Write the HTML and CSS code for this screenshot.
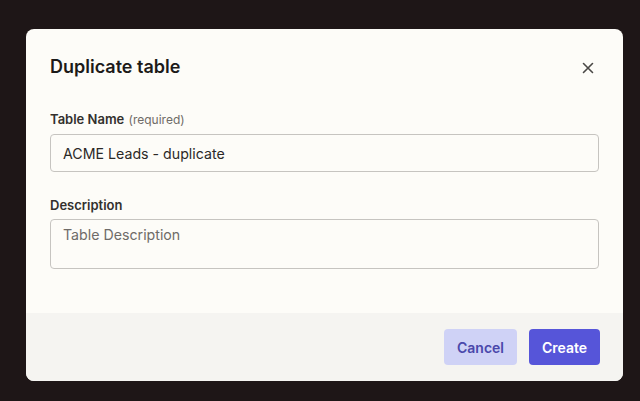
FILE: index.html
```html
<!DOCTYPE html>
<html lang="en">
<head>
  <meta charset="UTF-8">
  <title>Duplicate table</title>
  <link rel="stylesheet" href="styles.css">
</head>
<body>

<div class="modal">
  <div class="modal-header">
    <h2 class="modal-title">Duplicate table</h2>
    <span class="close">
      <svg width="12" height="12" viewBox="0 0 12 12"><path d="M1.5 1.5L10.5 10.5M10.5 1.5L1.5 10.5" stroke="#4a4846" stroke-width="1.6" stroke-linecap="round"/></svg>
    </span>
  </div>

  <div class="modal-body">
    <div class="field">
      <label class="field-label">Table Name <span class="hint">(required)</span></label>
      <input class="input" type="text" value="ACME Leads - duplicate">
    </div>
    <div class="field">
      <label class="field-label">Description</label>
      <textarea class="input textarea" placeholder="Table Description"></textarea>
    </div>
  </div>

  <div class="modal-footer">
    <button class="btn btn-cancel">Cancel</button>
    <button class="btn btn-create">Create</button>
  </div>
</div>

</body>
</html>
```
FILE: styles.css
```css
/* BASE */
* {
  box-sizing: border-box;
  font-family: Inter, "Noto Sans", sans-serif;
}
body {
  margin: 0;
  background-color: #1e1617;
  color: #1f1d1b;
}

/* MODAL */
.modal {
  margin: 29px 0 0 26px;
  width: 597px;
  background: #fdfcf8;
  border-radius: 8px;
  overflow: hidden;
}
.modal-header {
  display: flex;
  justify-content: space-between;
  align-items: center;
  padding: 26px 29px 0 24px;
}
.modal-title {
  margin: 0;
  font-size: 18px;
  line-height: 24px;
  font-weight: 600;
  color: #1c1a19;
}
.close {
  display: flex;
  margin-top: 2px;
}

.modal-body {
  padding: 31px 24px 44px;
}
.field + .field {
  margin-top: 24px;
}
.field-label {
  display: block;
  font-size: 13px;
  line-height: 18px;
  font-weight: 600;
  color: #33302d;
  margin-bottom: 5px;
}
.hint {
  font-size: 12px;
  font-weight: 400;
  color: #6f6b67;
  margin-left: 1px;
}
.input {
  display: block;
  width: 100%;
  height: 38px;
  border: 1px solid #c6c4c0;
  border-radius: 4px;
  background: #fdfcf8;
  padding: 0 12px;
  font-size: 14.2px;
  color: #2b2927;
  outline: none;
}
.textarea {
  height: 50px;
  padding: 5px 12px;
  resize: none;
  line-height: 20px;
}
.textarea::placeholder {
  color: #6f6b68;
}

/* FOOTER */
.modal-footer {
  display: flex;
  justify-content: flex-end;
  gap: 12px;
  background: #f5f4f1;
  padding: 16px 23px 16px 24px;
}
.btn {
  height: 36px;
  border: none;
  border-radius: 4px;
  font-size: 14px;
  font-weight: 600;
  cursor: pointer;
}
.btn-cancel {
  width: 73px;
  background: #cfd2f6;
  color: #4a48ab;
}
.btn-create {
  width: 71px;
  background: #5655d9;
  color: #fff;
}
```
